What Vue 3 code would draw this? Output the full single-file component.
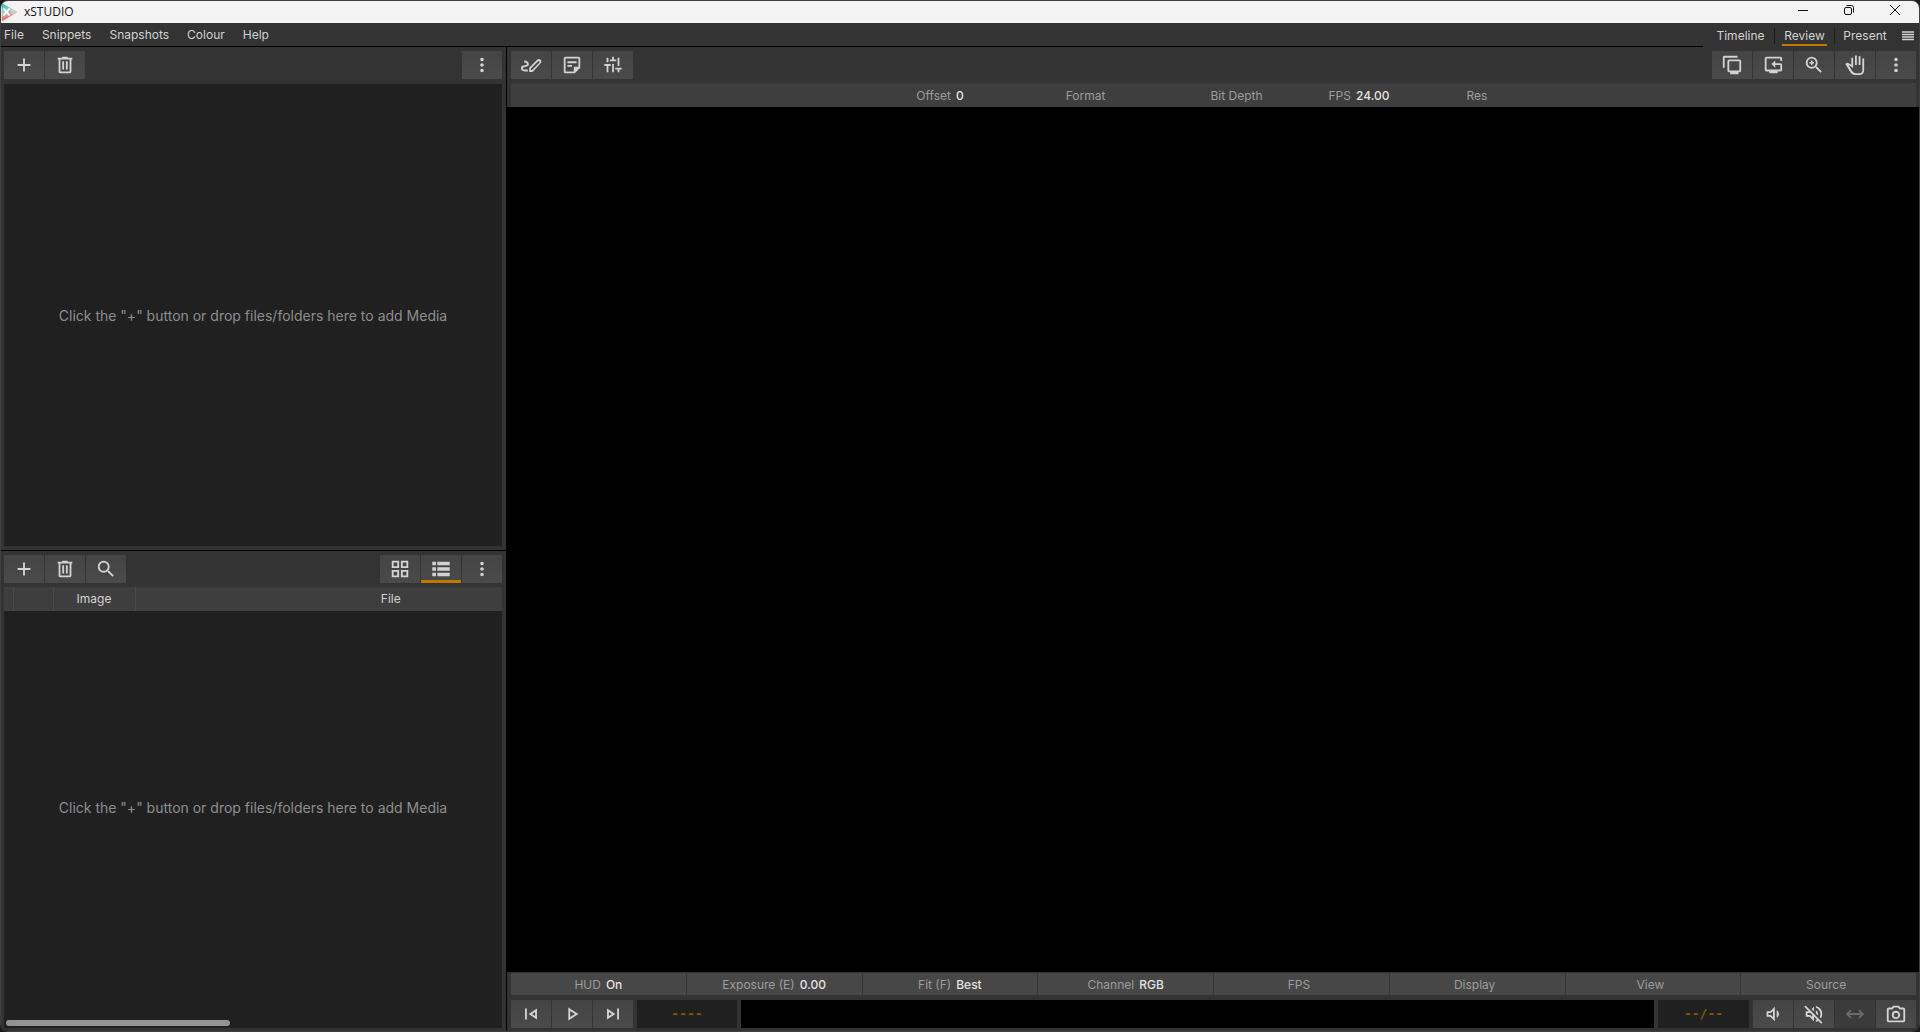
<template>
  <div class="window">
    <header class="titlebar">
      <svg class="logo" viewBox="0 0 16 18">
        <defs>
          <linearGradient id="logo-fill" x1="0" y1="0" x2="0.3" y2="1">
            <stop offset="0" stop-color="#2fc0bd" />
            <stop offset="0.5" stop-color="#a9cfcb" />
            <stop offset="0.7" stop-color="#d9a79f" />
            <stop offset="1" stop-color="#e0564a" />
          </linearGradient>
        </defs>
        <path d="M1.500 1.500 15 9 1.500 17z" fill="url(#logo-fill)" stroke="url(#logo-fill)" stroke-width="1.500" stroke-linejoin="round" />
        <path d="M9 4.500 16 9l-5 3z" fill="#c6cfc9" />
        <path d="m2.500 5.500 6 7M8.500 5.500l-6 7" stroke="#fff" stroke-width="1.800" />
      </svg>
      <h1 class="title">xSTUDIO</h1>
      <div class="window-buttons">
        <button type="button" aria-label="Minimise">
          <svg viewBox="0 0 12 12"><path d="M1 6.500h10" /></svg>
        </button>
        <button type="button" aria-label="Restore">
          <svg viewBox="0 0 12 12"><rect x="1.500" y="3.500" width="7" height="7" rx="1.500" /><path d="M3.500 1.500h5a2 2 0 0 1 2 2v5" /></svg>
        </button>
        <button type="button" aria-label="Close">
          <svg viewBox="0 0 12 12"><path d="m1 1 10 10M11 1 1 11" /></svg>
        </button>
      </div>
    </header>

    <div class="menubar">
      <nav class="menus">
        <button v-for="menu in menus" :key="menu" type="button">{{ menu }}</button>
      </nav>
      <nav class="layouts">
        <button
          v-for="layout in layouts"
          :key="layout"
          type="button"
          class="layout-tab"
          :class="{ 'layout-tab--active': layout === activeLayout }"
          @click="activeLayout = layout"
        >
          <span>{{ layout }}</span>
        </button>
        <button type="button" class="hamburger" aria-label="Layout menu">
          <svg viewBox="0 0 12 10"><path d="M0 1h12M0 3.500h12M0 6h12M0 8.500h12" /></svg>
        </button>
      </nav>
    </div>

    <main class="workspace">
      <div class="sidebar">
        <section class="panel panel--playlists">
          <div class="toolbar">
            <button v-for="name in ['add', 'trash']" :key="name" type="button" class="tool" :aria-label="name">
              <svg viewBox="0 0 24 24"><path :d="icons[name]" /></svg>
            </button>
            <span class="spacer"></span>
            <button type="button" class="tool" aria-label="more">
              <svg viewBox="0 0 24 24"><path :d="icons.more" /></svg>
            </button>
          </div>
          <div class="list">
            <p class="empty">Click the "+" button or drop files/folders here to add Media</p>
          </div>
        </section>

        <section class="panel panel--media">
          <div class="toolbar">
            <button v-for="name in ['add', 'trash', 'search']" :key="name" type="button" class="tool" :aria-label="name">
              <svg viewBox="0 0 24 24"><path :d="icons[name]" /></svg>
            </button>
            <span class="spacer"></span>
            <button
              v-for="name in ['grid', 'list']"
              :key="name"
              type="button"
              class="tool"
              :class="{ 'tool--active': name === mediaView }"
              :aria-label="name"
              @click="mediaView = name"
            >
              <svg viewBox="0 0 24 24"><path :d="icons[name]" /></svg>
            </button>
            <button type="button" class="tool" aria-label="more">
              <svg viewBox="0 0 24 24"><path :d="icons.more" /></svg>
            </button>
          </div>
          <div class="list list--media">
            <table class="columns">
              <thead>
                <tr>
                  <th class="col-flag"></th>
                  <th class="col-index"></th>
                  <th class="col-image">Image</th>
                  <th class="col-file">File</th>
                </tr>
              </thead>
            </table>
            <p class="empty">Click the "+" button or drop files/folders here to add Media</p>
            <div class="scrollbar"></div>
          </div>
        </section>
      </div>

      <section class="viewer">
        <div class="viewer-top">
          <div class="toolbar">
            <button v-for="name in ['draw', 'note', 'tune']" :key="name" type="button" class="tool" :aria-label="name">
              <svg viewBox="0 0 24 24"><path :d="icons[name]" /></svg>
            </button>
            <span class="spacer"></span>
            <button v-for="name in ['popout', 'reset', 'zoom', 'pan', 'more']" :key="name" type="button" class="tool" :aria-label="name">
              <svg viewBox="0 0 24 24"><path :d="icons[name]" /></svg>
            </button>
          </div>
          <div class="info">
            <span v-for="item in info" :key="item.label" :class="'info-' + item.id">
              {{ item.label }}<b v-if="item.value">{{ item.value }}</b>
            </span>
          </div>
        </div>

        <div class="viewport"></div>

        <div class="viewer-bottom">
          <div class="hud">
            <button v-for="item in hud" :key="item.label" type="button">
              {{ item.label }}<b>{{ item.value }}</b>
            </button>
          </div>
          <div class="transport">
            <div class="tool-group">
              <button v-for="name in ['previous', 'play', 'next']" :key="name" type="button" class="tool" :aria-label="name">
                <svg viewBox="0 0 24 24"><path :d="icons[name]" /></svg>
              </button>
            </div>
            <div class="time time--frame">----</div>
            <div class="timeline"></div>
            <div class="time time--total">--/--</div>
            <div class="tool-group">
              <button type="button" class="tool" aria-label="volume">
                <svg viewBox="0 0 24 24"><path :d="icons.volume" /></svg>
              </button>
              <button type="button" class="tool" aria-label="mute scrubbing">
                <svg viewBox="0 0 24 24"><path :d="icons.muted" /></svg>
              </button>
              <button type="button" class="tool" aria-label="loop" disabled>
                <svg viewBox="0 0 24 24"><path :d="icons.loop" /></svg>
              </button>
              <button type="button" class="tool" aria-label="snapshot">
                <svg viewBox="0 0 24 24"><path :d="icons.camera" /></svg>
              </button>
            </div>
          </div>
        </div>
      </section>
    </main>
  </div>
</template>

<script setup>
import { ref } from 'vue'

const menus = ['File', 'Snippets', 'Snapshots', 'Colour', 'Help']
const layouts = ['Timeline', 'Review', 'Present']
const activeLayout = ref('Review')
const mediaView = ref('list')

const info = [
  { id: 'offset', label: 'Offset', value: '0' },
  { id: 'format', label: 'Format' },
  { id: 'depth', label: 'Bit Depth' },
  { id: 'fps', label: 'FPS', value: '24.00' },
  { id: 'res', label: 'Res' }
]

const hud = [
  { label: 'HUD', value: 'On' },
  { label: 'Exposure (E)', value: '0.00' },
  { label: 'Fit (F)', value: 'Best' },
  { label: 'Channel', value: 'RGB' },
  { label: 'FPS' },
  { label: 'Display' },
  { label: 'View' },
  { label: 'Source' }
]

// 24x24 icon paths
const icons = {
  add: 'M19 13h-6v6h-2v-6H5v-2h6V5h2v6h6z',
  trash: 'M7 21q-.83 0-1.410-.590T5 19V6H4V4h5V3h6v1h5v2h-1v13q0 .83-.590 1.410T17 21zM17 6H7v13h10zM9 17h2V8H9zm4 0h2V8h-2z',
  more: 'M12 8a2 2 0 1 0 0-4 2 2 0 0 0 0 4m0 2a2 2 0 1 0 0 4 2 2 0 0 0 0-4m0 6a2 2 0 1 0 0 4 2 2 0 0 0 0-4',
  search: 'M15.500 14h-.790l-.280-.270A6.470 6.470 0 0 0 16 9.500 6.500 6.500 0 1 0 9.500 16c1.610 0 3.090-.590 4.230-1.570l.270.280v.790l5 4.990L20.490 19zm-6 0a4.500 4.500 0 1 1 0-9 4.500 4.500 0 0 1 0 9',
  grid: 'M3 3v8h8V3zm6 6H5V5h4zm-6 4v8h8v-8zm6 6H5v-4h4zm4-16v8h8V3zm6 6h-4V5h4zm-6 4v8h8v-8zm6 6h-4v-4h4z',
  list: 'M2.500 4h4v4h-4zM8 4h13.500v4H8zM2.500 10h4v4h-4zM8 10h13.500v4H8zM2.500 16h4v4h-4zM8 16h13.500v4H8z',
  draw: 'M10 19.500V15l8.600-8.600q.9-.9 2-.9t1.900.9.8 1.900-.8 1.900L13.800 19.500zm2-2h1.100l8-8q.4-.4.1-1.200-.7-.8-1.300-.3L12 15.800zM5 19q-1.700 0-2.900-.9T1 15.600q0-1.500 1.100-2.400T5 12.200q1.500-.2 2-.5.600-.3.600-.8 0-.6-.7-1T4.500 9.200L4.700 7.200q2.400.2 3.700 1.200t1.300 2.500q0 1.400-1 2.200t-3.200 1Q4.200 14.200 3.700 14.600T3 15.600q0 .7.600 1T5 17h3.500v2z',
  note: 'M5 19h9v-5h5V5H5zm0 2q-.83 0-1.410-.590T3 19V5q0-.83.590-1.410T5 3h14q.83 0 1.410.590T21 5v10l-6 6zm2-7v-2h5v2zm0-4V8h10v2z',
  tune: 'M5 20v-7H2.500v-2h7v2H7v7zM5 9V4h2v5zm6 11v-9h2v9zM8.500 8V6H11V3h2v3h2.500v2zM17 20v-3h-2.500v-2h7v2H19v3zm0-7V4h2v9z',
  popout: 'M2 15V4q0-.83.590-1.410T4 2h14v2H4v11zm8 7v-2H9q-.83 0-1.410-.590T7 18V8q0-.83.590-1.410T9 6h11q.83 0 1.410.590T22 8v10q0 .83-.590 1.410T20 20h-1v2zm-1-4h11V8H9z',
  reset: 'M8 21v-2H5q-.83 0-1.410-.590T3 17V5q0-.83.590-1.410T5 3h15q.83 0 1.410.590T22 5v2.500h-2V5H5v12h15v-5h-5.500v3L10.300 11l4.200-4v3H20q.83 0 1.410.590T22 12v5q0 .83-.590 1.410T20 19h-3v2z',
  zoom: 'M15.500 14h-.790l-.280-.270A6.470 6.470 0 0 0 16 9.500 6.500 6.500 0 1 0 9.500 16c1.610 0 3.090-.590 4.230-1.570l.270.280v.790l5 4.990L20.490 19zm-6 0a4.500 4.500 0 1 1 0-9 4.500 4.500 0 0 1 0 9m.8-7H8.700v1.700H7v1.600h1.700V12h1.600v-1.700H12V8.700h-1.700z',
  pan: 'M13 23q-2 0-3.700-1t-2.700-2.700L1.500 11l.8-.8q.6-.5 1.400-.6t1.500.4L8 11.800V4h2v11.200L4.800 11.800l3.900 6.400q.7 1.200 1.900 2T13 21h4q1.250 0 2.130-.880T20 18V5h2v13q0 2.100-1.450 3.550T17 23zM12 12V1.500h2V12zm4 0V2.500h2V12z',
  previous: 'M5.500 18V6h2v12zm13 0L9.500 12l9-6zm-2-3.750v-4.500L13.100 12z',
  play: 'M8 19V5l11 7zm2-3.650L15.250 12 10 8.650z',
  next: 'M16.500 18V6h2v12zm-11 0V6l9 6zm2-3.750L10.900 12 7.500 9.750z',
  volume: 'M16 7.970v8.050c1.480-.730 2.500-2.250 2.500-4.020 0-1.770-1.020-3.290-2.500-4.030M5 9v6h4l5 5V4L9 9zm7-.170v6.340L9.830 13H7v-2h2.830z',
  muted: 'M19.800 22.600 16.700 19.600q-1.200.8-2.700 1.100v-2q.7-.200 1.200-.600L12 14.800V20l-5-5H3V9h3.200L1.400 4.200l1.400-1.400 18.400 18.400zM19.600 16.800l-1.400-1.400q.8-1.600.8-3.400 0-2.300-1.400-4.200T14 5.300v-2q3.100.7 5.100 3.100T21 12q0 2.600-1.400 4.800m-3.300-3.300L14 11.200V8q2.500 1.400 2.500 4 0 .8-.2 1.500M12 9.200 9.400 6.600 12 4zm-2 6v-2.400L8.200 11H5v2h2.900z',
  loop: 'm7 17-5-5 5-5 1.400 1.400L5.800 11h12.400l-2.600-2.600L17 7l5 5-5 5-1.400-1.400 2.600-2.600H5.800l2.600 2.600z',
  camera: 'M12 17.500a4.500 4.500 0 1 0 0-9 4.500 4.500 0 0 0 0 9m0-2a2.500 2.500 0 1 1 0-5 2.500 2.500 0 0 1 0 5M4 21q-.83 0-1.410-.590T2 19V7q0-.83.590-1.410T4 5h3.200L9 3h6l1.800 2H20q.83 0 1.410.590T22 7v12q0 .83-.590 1.410T20 21zm0-2h16V7h-4L14.100 5H9.900L8 7H4z'
}
</script>

<style>
body {
  margin: 0;
  background: #1c1a1c;
}
</style>

<style scoped>
.window {
  display: flex;
  flex-direction: column;
  box-sizing: border-box;
  height: 100vh;
  border: 1px solid #403e40;
  border-radius: 8px;
  overflow: hidden;
  background: #333;
  color: #d2d2d2;
  font-family: Inter, "Liberation Sans", sans-serif;
  font-size: 12px;
  line-height: 16px;
}

button {
  margin: 0;
  padding: 0;
  border: 0;
  background: none;
  color: inherit;
  font: inherit;
  white-space: nowrap;
}

/* Title bar */
.titlebar {
  display: flex;
  flex: none;
  align-items: center;
  height: 22px;
  background: #f3f3f3;
  color: #111;
}

.logo {
  width: 16px;
  height: 18px;
}

.title {
  flex: 1;
  margin: 0 0 0 7px;
  font: 400 12px/18px "Open Sans", "Noto Sans", sans-serif;
}

.window-buttons {
  display: flex;
  align-self: flex-start;
  padding-right: 1px;
}

.window-buttons button {
  display: flex;
  align-items: center;
  justify-content: center;
  width: 46px;
  height: 18px;
}

.window-buttons svg {
  width: 12px;
  height: 12px;
  fill: none;
  stroke: #111;
}

/* Menu bar */
.menubar {
  display: flex;
  flex: none;
  height: 24px;
}

.menus {
  display: flex;
  flex: 1;
  gap: 18px;
  padding-left: 3px;
  border-bottom: 1px solid #000;
}

.layouts {
  display: flex;
  align-items: center;
  padding: 1px 0 0 4px;
}

.layout-tab {
  display: flex;
  justify-content: center;
  width: 60px;
  height: 16px;
  border-right: 1px solid #1c1c1c;
}

.layout-tab:first-child {
  width: 68px;
}

.layout-tab:nth-child(3) {
  border-right: 0;
}

.layout-tab span {
  height: 16px;
  padding: 0 2px;
  border-bottom: 2px solid transparent;
}

.layout-tab--active span {
  border-color: #bf7800;
}

.hamburger {
  display: flex;
  padding: 0 5px 0 7px;
}

.hamburger svg {
  width: 12px;
  height: 10px;
  stroke: #d2d2d2;
  stroke-width: 1.3;
}

/* Panels */
.workspace {
  display: grid;
  flex: 1;
  grid-template-columns: 505fr 1412fr;
  gap: 1px;
  min-height: 0;
  background: #000;
}

.sidebar {
  display: grid;
  grid-template-rows: 503fr 480fr;
  gap: 1px;
  min-width: 0;
}

.panel {
  display: flex;
  flex-direction: column;
  min-width: 0;
  padding: 4px 4px 4px 3px;
  background: #333;
}

.panel--playlists {
  gap: 5px;
}

.panel--media {
  gap: 4px;
  padding-bottom: 3px;
}

.toolbar,
.tool-group {
  display: flex;
  flex: none;
  gap: 1px;
}

.spacer {
  flex: 1;
}

.tool {
  display: flex;
  align-items: center;
  justify-content: center;
  box-sizing: border-box;
  width: 40px;
  height: 28px;
  background: linear-gradient(#444, #4a4a4a);
}

.tool svg {
  width: 22px;
  height: 22px;
  fill: #d2d2d2;
}

.tool--active {
  box-shadow: inset 0 -3px #bf7800;
}

.tool:disabled {
  background: #3b3b3b;
}

.tool:disabled svg {
  fill: #6b6b6b;
}

.list {
  display: flex;
  flex: 1;
  flex-direction: column;
  overflow: hidden;
  background: #202020;
}

.empty {
  display: flex;
  flex: 1;
  align-items: center;
  justify-content: center;
  margin: 0;
  padding-top: 2px;
  color: #8e8e8e;
  font-size: 14px;
}

.list--media .empty {
  padding: 0 0 16px;
}

.columns {
  flex: none;
  width: 643px;
  border-collapse: collapse;
  table-layout: fixed;
  background: #3e3e3e;
}

.columns th {
  box-sizing: border-box;
  height: 24px;
  padding: 0;
  border-right: 1px solid #4a4a4a;
  font-weight: 400;
}

.col-flag {
  width: 9px;
}

.col-index {
  width: 40px;
}

.col-image {
  width: 82px;
}

.scrollbar {
  width: 45%;
  height: 6px;
  margin: 0 2px 2px;
  border-radius: 3px;
  background: #939393;
}

/* Viewer */
.viewer {
  display: flex;
  flex-direction: column;
  min-width: 0;
}

.viewer-top {
  padding: 4px 3px 0 4px;
  background: #333;
}

.info {
  display: flex;
  align-items: center;
  justify-content: center;
  box-sizing: border-box;
  height: 24px;
  margin-top: 4px;
  padding: 2px 9px 0 0;
  background: #3e3e3e;
  color: #9c9c9c;
  text-align: center;
}

.info b,
.hud b {
  margin-left: 5px;
  color: #e2e2e2;
  font-weight: 500;
}

.info-offset {
  width: 140px;
}

.info-format,
.info-depth {
  width: 151px;
}

.info-fps {
  width: 94px;
}

.info-res {
  width: 142px;
}

.viewport {
  flex: 1;
  background: #000;
}

.viewer-bottom {
  padding: 1px 3px 3px 4px;
  background: #333;
}

.hud {
  display: grid;
  grid-template-columns: repeat(8, 1fr);
  gap: 1px;
}

.hud button {
  height: 22px;
  padding-top: 2px;
  background: #474747;
  color: #9c9c9c;
}

.transport {
  display: flex;
  gap: 4px;
  margin-top: 5px;
}

.time {
  display: flex;
  align-items: center;
  justify-content: center;
  background: #202020;
  color: #8a5800;
  font: 700 13px/16px "DejaVu Sans Mono", monospace;
}

.time--frame {
  width: 100px;
}

.time--total {
  width: 91px;
}

.timeline {
  flex: 1;
  background: #000;
}
</style>
